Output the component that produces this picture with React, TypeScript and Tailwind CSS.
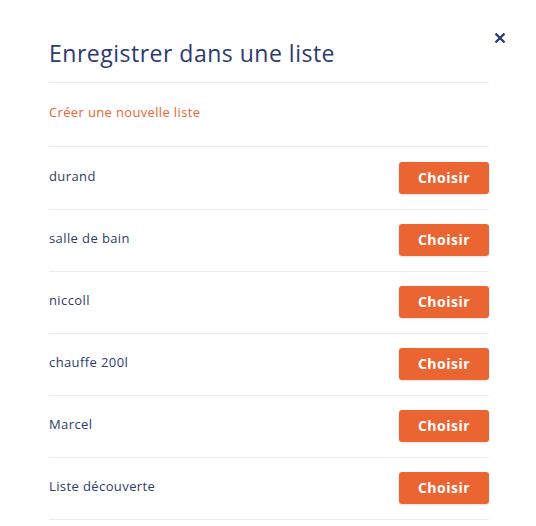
import React from "react";

const items = ["durand", "salle de bain", "niccoll", "chauffe 200l", "Marcel", "Liste découverte"];

export default function App() {
  return (
    <div className="w-[536px] h-[526px] bg-white relative overflow-hidden" style={{ fontFamily: '"Open Sans", "Noto Sans", sans-serif' }}>
      <button className="absolute left-[494px] top-[32px] w-[12px] h-[12px] flex items-center justify-center">
        <svg width="12" height="12" viewBox="0 0 12 12">
          <path d="M1.5 1.5 L10.5 10.5 M10.5 1.5 L1.5 10.5" stroke="#2c3a6f" strokeWidth="2.4" strokeLinecap="butt" />
        </svg>
      </button>
      <div className="pl-[49px] w-[489px] pt-[38px]">
        <h1 className="text-[23px] leading-[30px] font-medium tracking-[0.5px] text-[#2c3a6f] pb-[14px] border-b border-[#ececec]">
          Enregistrer dans une liste
        </h1>
        <div className="h-[64px] flex items-center pb-[3px] border-b border-[#ececec]">
          <span className="text-[13px] tracking-[0.35px] text-[#eb6433]">Créer une nouvelle liste</span>
        </div>
        {items.map((it, i) => (
          <div
            key={it}
            className={`${i === 0 ? "h-[63px] pt-[15px]" : "h-[62px] pt-[14px]"} flex items-start justify-between border-b border-[#ececec]`}
          >
            <span className="h-[32px] flex items-center text-[13px] font-medium tracking-[0.4px] text-[#2c3a6f] -mt-[1px]">{it}</span>
            <button className="w-[90px] h-[32px] pb-[2px] rounded-[3px] bg-[#eb6533] text-white text-[14px] font-bold tracking-[0.5px] shadow-sm">
              Choisir
            </button>
          </div>
        ))}
      </div>
    </div>
  );
}
